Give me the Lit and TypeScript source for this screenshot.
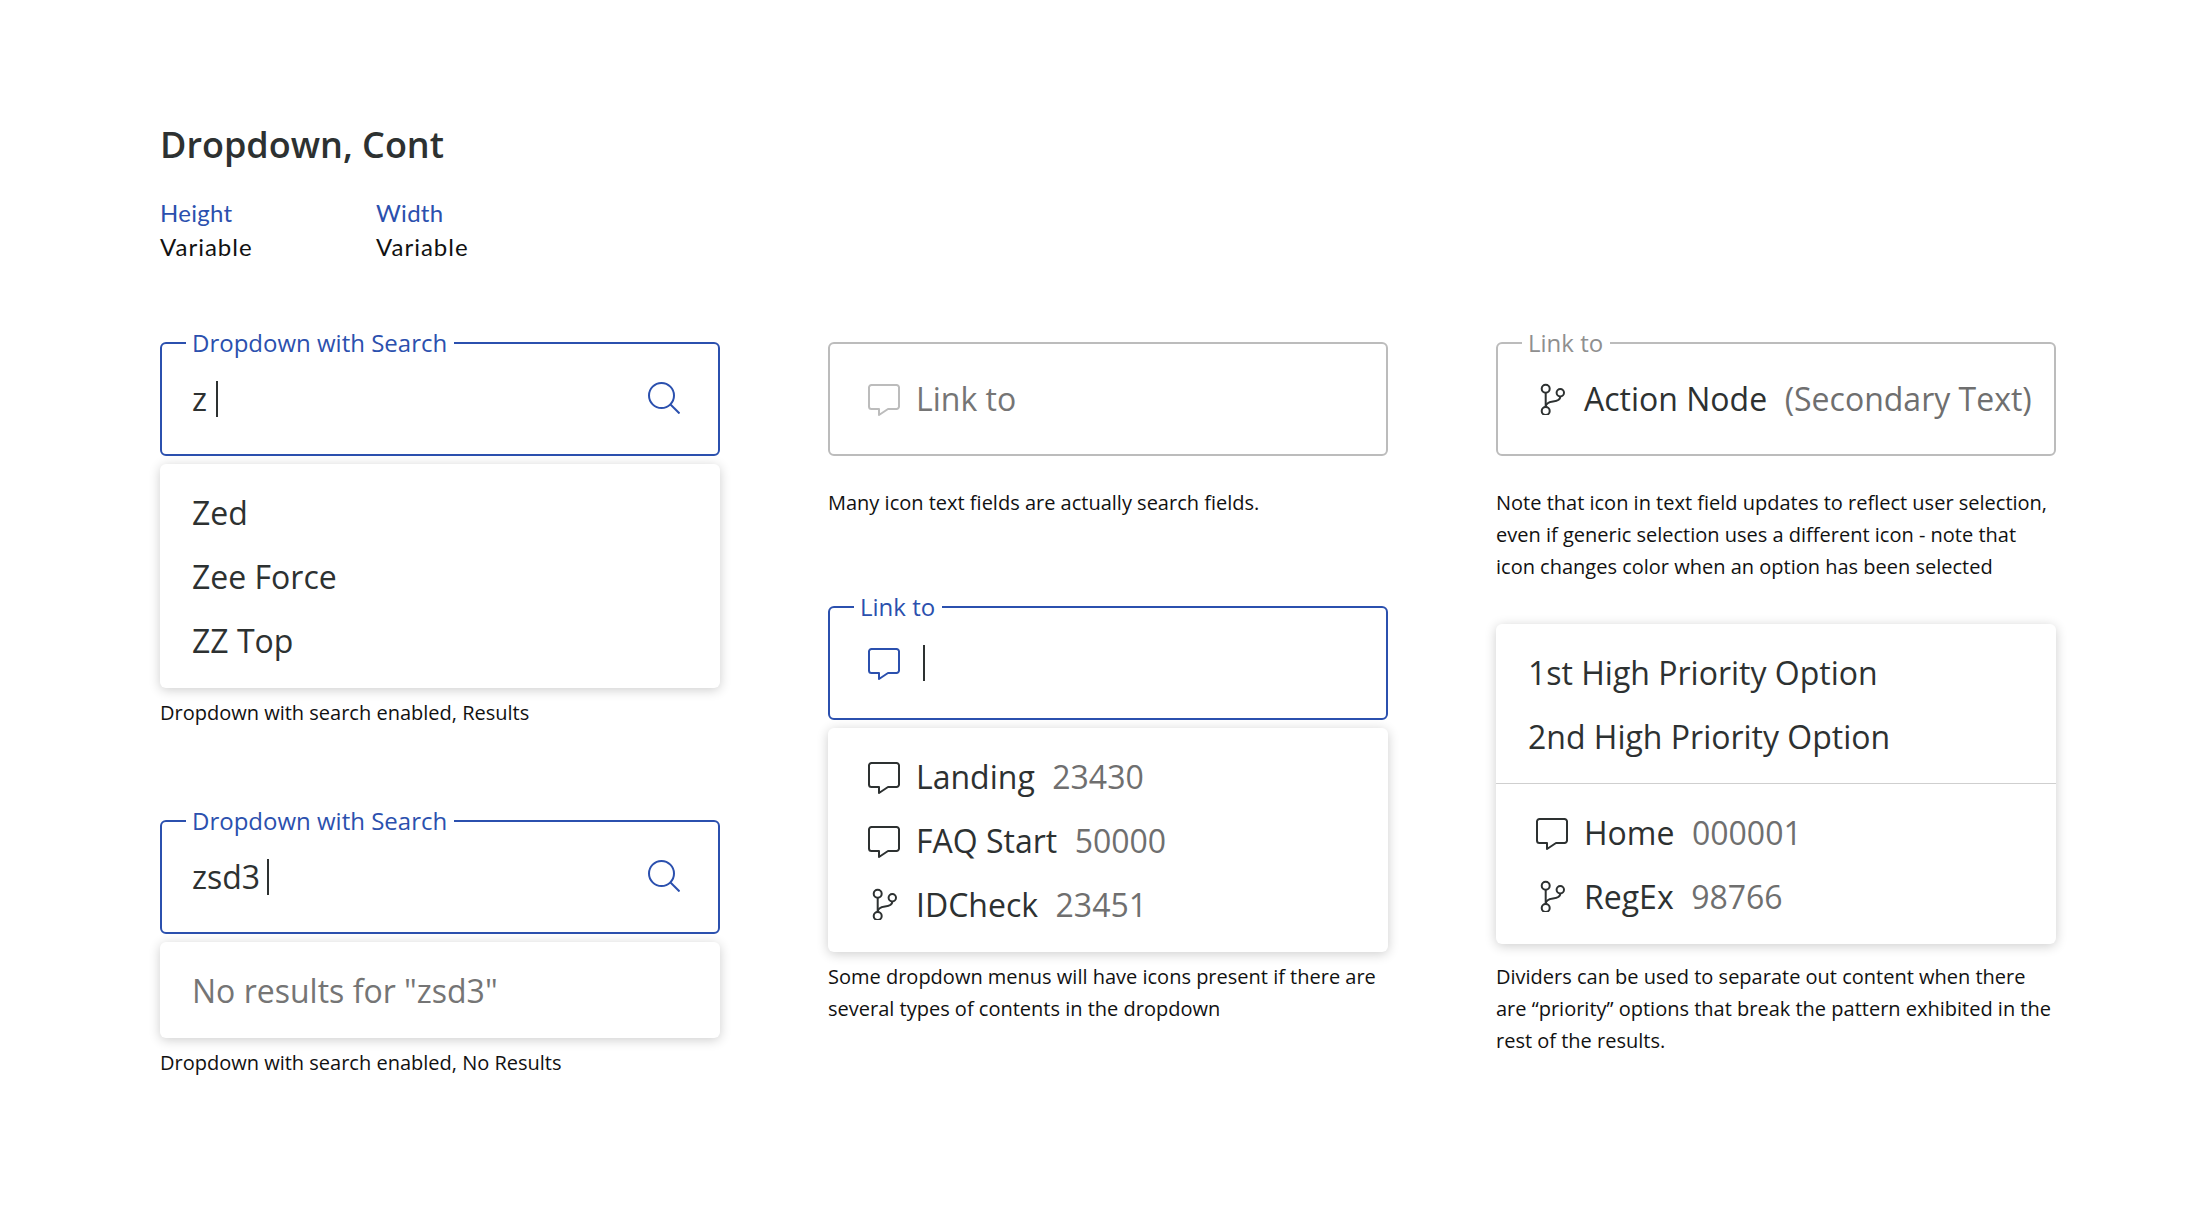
import { LitElement, html, css } from "lit";
import { customElement } from "lit/decorators.js";

const chat = html`<svg class="ico chat" viewBox="0 0 32 32" fill="none" stroke="currentColor" stroke-width="2" stroke-linejoin="round"><path d="M3.5 1h25A2.5 2.5 0 0 1 31 3.5v19a2.5 2.5 0 0 1-2.5 2.5H20l-9 6v-6H3.5A2.5 2.5 0 0 1 1 22.5v-19A2.5 2.5 0 0 1 3.5 1z"/></svg>`;
const branch = html`<svg class="ico" viewBox="0 0 32 32" fill="none" stroke="currentColor" stroke-width="2"><circle cx="9.7" cy="5.7" r="4"/><circle cx="24.3" cy="9.7" r="3.7"/><circle cx="9.7" cy="28" r="4"/><path d="M9.7 9.7V24"/><path d="M24.3 13.4C24.3 17 21 18 17 18.5C13 19 9.7 20 9.7 24"/></svg>`;
const search = html`<svg class="ico search" viewBox="0 0 32 32" fill="none" stroke="currentColor" stroke-width="2"><circle cx="13.5" cy="13.5" r="12.5"/><path d="M22.5 22.5L31.5 31.5"/></svg>`;

@customElement("app-root")
export class AppRoot extends LitElement {
  static styles = css`
    :host {
      display: block;
      height: 1224px;
      box-sizing: border-box;
      padding: 124px 0 0 160px;
      background: #fff;
      font-family: "Open Sans", sans-serif;
      color: #2d3131;
    }
    h1 {
      margin: 0;
      font-size: 36px;
      line-height: 42px;
      font-weight: 600;
    }
    .specs {
      display: flex;
      margin-top: 30px;
      font-size: 24px;
      line-height: 34px;
    }
    .spec {
      width: 216px;
    }
    .spec .k {
      color: #2b50ae;
      font-family: "Lato", sans-serif;
      letter-spacing: 0.3px;
    }
    .spec .v {
      color: #111;
      font-family: "Lato", sans-serif;
      letter-spacing: 1px;
    }
    .cols {
      display: grid;
      grid-template-columns: repeat(3, 560px);
      column-gap: 108px;
      margin-top: 78px;
      align-items: start;
    }
    .field {
      position: relative;
      box-sizing: border-box;
      height: 114px;
      border: 2px solid #bcbcbc;
      border-radius: 6px;
      padding: 0 38px 0 30px;
      display: flex;
      align-items: center;
      font-size: 32px;
      white-space: nowrap;
      background: #fff;
    }
    .field.icon {
      padding: 0 0 0 38px;
    }
    .field.active {
      border-color: #2b50ae;
    }
    .txt {
      padding-bottom: 2px;
    }
    .legend {
      position: absolute;
      left: 24px;
      top: -15px;
      padding: 0 7px 0 6px;
      background: #fff;
      font-size: 24px;
      line-height: 28px;
      color: #8f8f8f;
    }
    .active .legend {
      color: #2b50ae;
    }
    .ico {
      width: 32px;
      height: 32px;
      flex: none;
      margin-right: 16px;
    }
    .chat {
      margin-top: 2px;
    }
    .row .chat {
      margin-top: 4px;
    }
    .search {
      margin: -2px 0 0 auto;
      color: #2b50ae;
    }
    .slot {
      display: flex;
    }
    .ph {
      color: #bcbcbc;
    }
    .act {
      color: #2b50ae;
    }
    .muted {
      color: #757575;
    }
    .caret {
      display: inline-block;
      width: 2px;
      height: 36px;
      background: #2d3131;
      margin-left: 7px;
    }
    .caret.wide {
      margin-left: 9px;
    }
    .menu {
      margin-top: 8px;
      padding: 16px 0;
      background: #fff;
      border-radius: 6px;
      box-shadow: 0 2px 12px rgba(0, 0, 0, 0.2);
      font-size: 32px;
    }
    .row {
      height: 64px;
      display: flex;
      align-items: center;
      padding: 0 32px;
    }
    .row.icon {
      padding-left: 40px;
    }
    .sec {
      color: #6f6f6f;
      margin-left: 17.5px;
    }
    .divider {
      height: 1px;
      background: #cfcfcf;
      margin: 15px 0 16px;
    }
    .cap {
      margin: 9px 0 0;
      font-size: 20px;
      line-height: 32px;
      color: #111;
    }
    .cap.far {
      margin-top: 31px;
    }
    .cap.last {
      margin-top: 17px;
    }
    .block2 {
      margin-top: 91px;
    }
    .block2b {
      margin-top: 87px;
    }
    .menu.m3 {
      margin-top: 41px;
    }
  `;

  render() {
    return html`
      <h1>Dropdown, Cont</h1>
      <div class="specs">
        <div class="spec"><div class="k">Height</div><div class="v">Variable</div></div>
        <div class="spec"><div class="k">Width</div><div class="v">Variable</div></div>
      </div>
      <div class="cols">
        <div>
          <div class="field active">
            <span class="legend">Dropdown with Search</span>
            <span class="txt">z</span><span class="caret wide"></span>${search}
          </div>
          <div class="menu">
            <div class="row">Zed</div>
            <div class="row">Zee Force</div>
            <div class="row">ZZ Top</div>
          </div>
          <p class="cap">Dropdown with search enabled, Results</p>
          <div class="field active block2">
            <span class="legend">Dropdown with Search</span>
            <span class="txt">zsd3</span><span class="caret"></span>${search}
          </div>
          <div class="menu">
            <div class="row muted">No results for "zsd3"</div>
          </div>
          <p class="cap">Dropdown with search enabled, No Results</p>
        </div>
        <div>
          <div class="field icon">
            <span class="slot ph">${chat}</span><span class="txt muted">Link to</span>
          </div>
          <p class="cap far">Many icon text fields are actually search fields.</p>
          <div class="field icon active block2b">
            <span class="legend">Link to</span>
            <span class="slot act">${chat}</span><span class="caret"></span>
          </div>
          <div class="menu">
            <div class="row icon">${chat}Landing<span class="sec">23430</span></div>
            <div class="row icon">${chat}FAQ Start<span class="sec">50000</span></div>
            <div class="row icon">${branch}IDCheck<span class="sec">23451</span></div>
          </div>
          <p class="cap">Some dropdown menus will have icons present if there are several types of contents in the dropdown</p>
        </div>
        <div>
          <div class="field icon">
            <span class="legend">Link to</span>
            ${branch}<span class="txt">Action Node<span class="sec">(Secondary Text)</span></span>
          </div>
          <p class="cap far">Note that icon in text field updates to reflect user selection, even if generic selection uses a different icon - note that icon changes color when an option has been selected</p>
          <div class="menu m3">
            <div class="row">1st High Priority Option</div>
            <div class="row">2nd High Priority Option</div>
            <div class="divider"></div>
            <div class="row icon">${chat}Home<span class="sec">000001</span></div>
            <div class="row icon">${branch}RegEx<span class="sec">98766</span></div>
          </div>
          <p class="cap last">Dividers can be used to separate out content when there are “priority” options that break the pattern exhibited in the rest of the results.</p>
        </div>
      </div>
    `;
  }
}
